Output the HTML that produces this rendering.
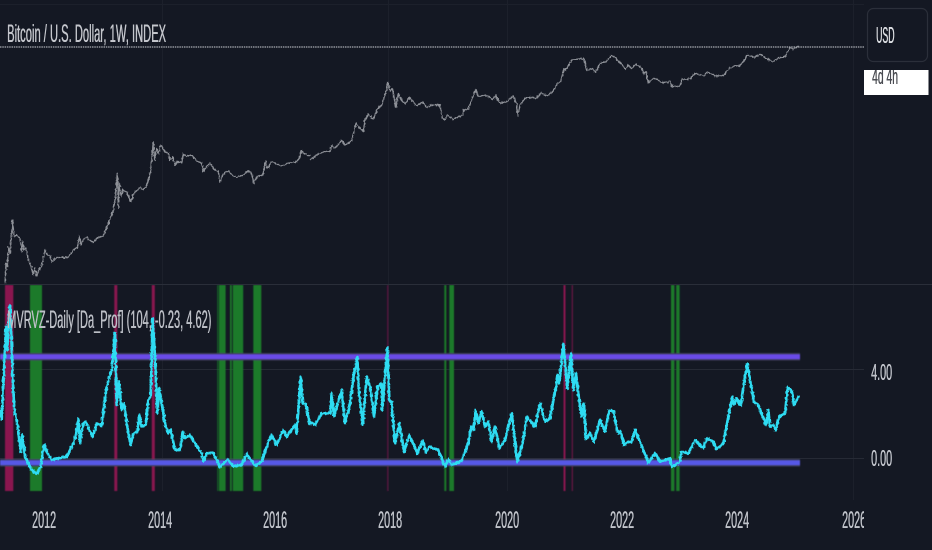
<!DOCTYPE html>
<html><head><meta charset="utf-8">
<style>
html,body{margin:0;padding:0;background:#141823;}
#p{position:relative;width:932px;height:550px;overflow:hidden;background:#141823;font-family:"Liberation Sans",sans-serif;color:#c0c3ca;}
.t{position:absolute;white-space:nowrap;transform-origin:0 50%;line-height:20px;filter:blur(.3px);text-shadow:.6px 0 0 currentColor;}
.y{top:511px;font-size:24px;transform:scaleX(.45);}
svg{position:absolute;left:0;top:0;}
</style></head><body><div id="p">
<svg width="932" height="550" viewBox="0 0 932 550">
<defs>
<filter id="j" x="-2%" y="-5%" width="104%" height="110%" filterUnits="objectBoundingBox">
<feTurbulence type="fractalNoise" baseFrequency="0.55 0.35" numOctaves="2" seed="7" result="n"/>
<feDisplacementMap in="SourceGraphic" in2="n" scale="3" xChannelSelector="R" yChannelSelector="G"/>
<feGaussianBlur stdDeviation=".35"/>
</filter>
<filter id="b" x="-1%" y="-5%" width="102%" height="110%"><feGaussianBlur stdDeviation=".45"/></filter>
</defs>
<g stroke="#1c202b" stroke-width="1" fill="none">
<path d="M0 4.500H864M162.500 0V284M388.500 0V284M507.500 0V284M853.500 0V500M162.500 284V491M388.500 284V491M507.500 284V491"/>
</g>
<path d="M0 369.500H864M0 458.500H864" stroke="#262a35" stroke-width="1"/>
<g filter="url(#b)">
<g fill="#1f7a2a">
<rect x="30" y="285" width="12" height="206"/>
<rect x="217.300" y="285" width="0.900" height="206"/>
<rect x="219" y="285" width="6.600" height="206"/>
<rect x="230" y="285" width="1.800" height="206"/>
<rect x="232.800" y="285" width="10.400" height="206"/>
<rect x="253.300" y="285" width="8" height="206"/>
<rect x="444.300" y="285" width="2" height="206"/>
<rect x="449.300" y="285" width="4.700" height="206"/>
<rect x="671" y="285" width="3.400" height="206"/>
<rect x="676.200" y="285" width="3.400" height="206"/>
</g>
<g fill="#8a1650">
<rect x="5" y="285" width="8.300" height="206"/>
<rect x="114.300" y="285" width="3" height="206"/>
<rect x="151.800" y="285" width="3" height="206"/>
<rect x="387.200" y="285" width="1" height="206" fill="#6a1a45"/>
<rect x="563.500" y="285" width="2" height="206"/>
<rect x="571.700" y="285" width="1.200" height="206" fill="#6a1a45"/>
</g>
<rect x="0" y="353" width="800" height="7.500" fill="#3f3d5e"/>
<rect x="0" y="354.500" width="800" height="4.500" fill="#6a4be8"/>
<rect x="0" y="459" width="800" height="7.500" fill="#3d4060"/>
<rect x="0" y="460.500" width="800" height="4.500" fill="#5658e6"/>
</g>

<g fill="none" stroke="#8d9097" stroke-linejoin="round" filter="url(#j)">
<g transform="translate(0,0) scale(.33333)" stroke-width="4">
<polyline points="15,850 18,790 22,800 25,740 30,760 35,700 38,660 42,710 50,705 60,715 65,755 68,725 72,750 78,745 85,780 92,795 100,825 104,805 110,828 118,805 125,800 130,770 135,750 142,765 150,765 155,785 165,775 180,772 205,772 212,762 225,745 232,745 238,708 243,735 250,718 260,712 270,722 280,726 295,712 310,708 325,670 340,630 345,600 352,520 355,622 358,550 364,590 368,568 380,578 393,605 400,582 420,562 428,570 440,558 447,535 452,510 460,425 464,480 470,445 476,460 482,435 495,455 505,460 510,480 518,470 525,498 530,485 545,488 550,462 560,470 575,465 590,482 605,490 610,515 620,500 630,488 640,505 655,515 660,548 668,525 685,512 695,525 710,532 730,525 745,512 755,522 762,550 770,530 788,526 797,482 802,505 815,485 830,492 845,498 870,488 893,485 905,452 915,462 930,468"/>
</g>
<g transform="translate(310,20) scale(.33333)" stroke-width="4">
<polyline points="0,420 20,405 40,395 60,395 65,375 72,385 80,380 95,360 105,375 125,362 138,310 150,325 160,335 165,300 175,282 190,298 200,270 215,255 228,215 233,186 240,215 247,205 258,262 265,220 275,240 285,252 298,232 320,258 338,245 350,262 365,255 390,255 397,295 405,300 412,285 430,298 458,285 462,268 475,268 485,238 497,210 505,230 525,225 540,232 548,240 556,225 570,250 590,245 610,228 620,250 623,288 630,255 645,235 665,232 680,235 693,218 712,228 728,215 742,190 752,185 762,145 768,150 785,120 800,118 822,115 830,152 845,145 857,157 870,130 888,125 905,106 915,112 930,130"/>
</g>
<g transform="translate(620,0) scale(.33333)" stroke-width="4">
<polyline points="0,185 15,207 25,195 35,207 47,192 65,205 72,222 78,215 85,250 100,235 112,238 125,248 150,245 158,260 180,258 187,237 200,238 212,235 225,220 240,225 252,227 262,215 285,228 312,226 325,207 345,197 358,198 372,182 382,165 405,172 420,163 440,175 458,185 475,175 495,170 510,142 520,148 535,138"/>
</g>
</g>
<path d="M0 47H864" stroke="#a9acb2" stroke-width="1.300" stroke-dasharray="1.500 .8"/>

<g fill="none" stroke="#2fdcf2" stroke-linejoin="round" filter="url(#j)">
<g transform="translate(0,270) scale(.33333)" stroke-width="8">
<polyline points="0,420 5,450 12,300 18,170 22,240 25,160 30,105 34,200 38,320 43,420 52,460 62,545 67,495 75,560 85,580 95,600 110,612 122,590 132,525 140,545 155,570 175,565 200,560 220,520 228,495 235,445 240,520 250,460 258,455 270,485 278,500 290,460 305,468 320,350 335,300 345,190 350,405 357,335 365,420 372,400 382,470 392,525 400,490 412,485 418,435 425,470 437,465 445,390 452,380 458,145 465,260 472,430 478,355 485,400 495,460 505,490 512,480 525,540 540,540 548,485 555,505 570,495 585,520 605,550 610,575 620,550 640,548 660,592 682,568 700,588 725,585 740,552 765,588 785,575 800,530 815,495 830,525 850,480 860,500 885,465 890,490 902,320 908,400 918,405 930,465"/>
</g>
<g transform="translate(310,270) scale(.33333)" stroke-width="8">
<polyline points="0,455 15,465 35,430 60,430 65,370 72,440 85,395 95,360 105,460 120,400 132,310 142,262 146,355 158,465 170,320 180,350 192,440 203,350 215,340 217,420 232,232 238,390 245,400 255,520 268,460 282,545 298,495 322,550 338,512 348,548 358,530 385,540 405,590 415,568 425,585 455,572 475,520 483,470 490,480 497,422 505,460 515,425 525,470 535,455 545,515 555,470 568,535 585,510 605,430 622,575 640,510 650,440 675,470 690,400 705,455 720,445 738,350 742,315 748,340 760,222 772,355 783,252 790,360 798,310 805,370 815,440 822,400 828,508 840,490 852,515 870,450 885,485 897,422 910,422 922,485 930,490"/>
</g>
<g transform="translate(620,270) scale(.33333)" stroke-width="8">
<polyline points="0,480 12,525 25,515 35,515 45,480 60,515 85,578 105,550 120,575 150,565 155,590 178,578 185,545 205,550 225,510 250,535 260,505 280,515 290,538 310,520 325,440 337,380 342,405 350,385 362,408 370,350 382,282 390,330 402,395 415,405 438,465 445,420 450,470 460,465 467,482 478,440 495,430 503,352 515,362 522,405 527,395 538,378"/>
</g>
</g>
<rect x="864" y="0" width="68" height="550" fill="#141823"/>
<path d="M0 284.500H932" stroke="#2a2e39" stroke-width="1"/>
<rect x="867.500" y="8.500" width="60" height="53" rx="6" fill="#141823" stroke="#2b2f3a" stroke-width="1.200"/>
<rect x="864" y="70" width="64.500" height="25" fill="#ffffff"/>
</svg>
<div class="t" style="left:7px;top:24px;font-size:25px;transform:scaleX(.447);color:#c4c6cc;">Bitcoin / U.S. Dollar, 1W, INDEX</div>
<div class="t" style="left:7px;top:310px;font-size:25px;transform:scaleX(.442);color:#bcbfc6;">MVRVZ-Daily [Da_Prof] (104, -0.23, 4.62)</div>
<div class="t" style="left:876px;top:25px;font-size:23px;transform:scaleX(.38);color:#dcdee2;">USD</div>
<div style="position:absolute;left:864px;top:70px;width:64px;height:25px;overflow:hidden;">
<div class="t" style="left:8px;top:-3px;font-size:22px;transform:scaleX(.47);color:#4a4c52;">4d 4h</div></div>
<div class="t" style="left:871px;top:362px;font-size:23px;transform:scaleX(.47);">4.00</div>
<div class="t" style="left:871px;top:448px;font-size:23px;transform:scaleX(.47);">0.00</div>
<div class="t y" style="left:32px;">2012</div>
<div class="t y" style="left:148px;">2014</div>
<div class="t y" style="left:263px;">2016</div>
<div class="t y" style="left:378px;">2018</div>
<div class="t y" style="left:495px;">2020</div>
<div class="t y" style="left:610px;">2022</div>
<div class="t y" style="left:725px;">2024</div>
<div style="position:absolute;left:830px;top:505px;width:34px;height:30px;overflow:hidden;">
<div class="t" style="left:12px;top:6px;font-size:24px;transform:scaleX(.45);">2026</div></div>
</div></body></html>
